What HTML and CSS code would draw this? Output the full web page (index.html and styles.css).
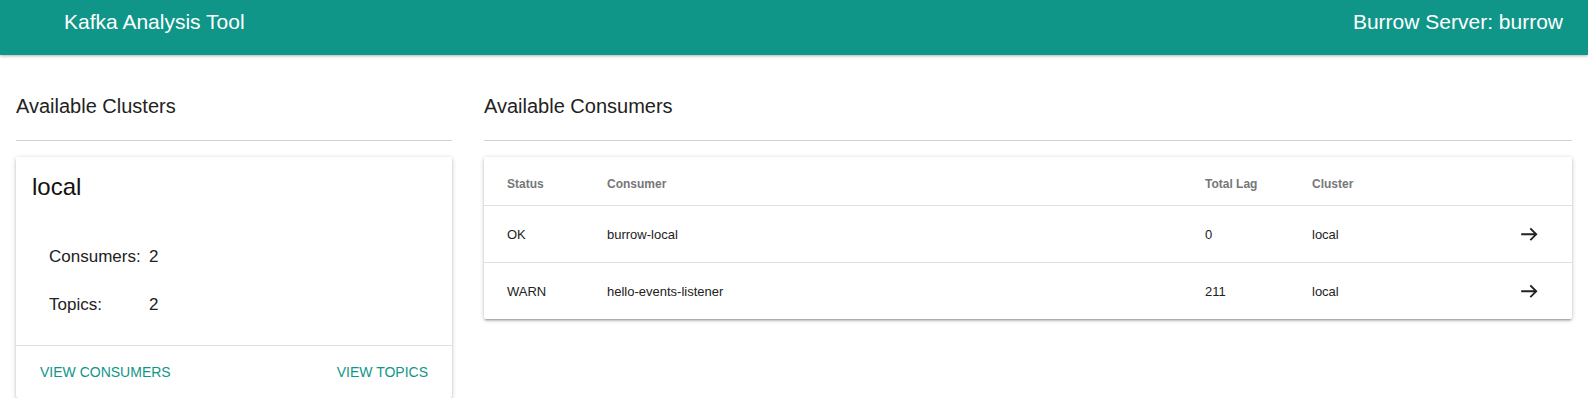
FILE: index.html
```html
<!DOCTYPE html>
<html lang="en">
<head>
<meta charset="utf-8">
<title>Kafka Analysis Tool</title>
<link rel="stylesheet" href="styles.css">
</head>
<body>
<header class="appbar">
  <div class="appbar-title">Kafka Analysis Tool</div>
  <div class="appbar-server">Burrow Server: burrow</div>
</header>
<main class="content">
  <section class="col col-left">
    <h2 class="section-title">Available Clusters</h2>
    <hr class="section-divider">
    <div class="card">
      <div class="card-body">
        <div class="card-title">local</div>
        <div class="stats">
          <div class="stat-label">Consumers:</div><div class="stat-value">2</div>
          <div class="stat-label">Topics:</div><div class="stat-value">2</div>
        </div>
      </div>
      <div class="card-actions">
        <span class="btn">View Consumers</span>
        <span class="btn">View Topics</span>
      </div>
    </div>
  </section>
  <section class="col col-right">
    <h2 class="section-title">Available Consumers</h2>
    <hr class="section-divider">
    <div class="table-card">
      <div class="trow thead">
        <div>Status</div><div>Consumer</div><div>Total Lag</div><div>Cluster</div><div></div>
      </div>
      <div class="trow tbody">
        <div>OK</div><div>burrow-local</div><div>0</div><div>local</div>
        <div class="arrow"><svg width="24" height="24" viewBox="0 0 24 24"><path d="M4.2 12.3H19.2M13.3 6.4L19.2 12.3L13.3 18.2" fill="none" stroke="#222" stroke-width="1.9"/></svg></div>
      </div>
      <div class="trow tbody">
        <div>WARN</div><div>hello-events-listener</div><div>211</div><div>local</div>
        <div class="arrow"><svg width="24" height="24" viewBox="0 0 24 24"><path d="M4.2 12.3H19.2M13.3 6.4L19.2 12.3L13.3 18.2" fill="none" stroke="#222" stroke-width="1.9"/></svg></div>
      </div>
    </div>
  </section>
</main>
</body>
</html>
```
FILE: styles.css
```css
* { box-sizing: border-box; }
html, body { margin: 0; padding: 0; background: #fff; }
body {
  font-family: "Liberation Sans", Arial, Helvetica, sans-serif;
  color: #222;
}
.appbar {
  height: 55px;
  background: #109688;
  color: #fff;
  display: flex;
  justify-content: space-between;
  align-items: flex-start;
  padding: 10px 25px 0 64px;
  font-size: 21px;
  line-height: 24px;
  box-shadow: 0 1px 3px rgba(0,0,0,0.3);
  position: relative;
}
.content {
  display: flex;
  gap: 32px;
  padding: 0 16px;
}
.col-left { width: 436px; flex: none; }
.col-right { flex: 1; }
.section-title {
  margin: 39px 0 0;
  font-size: 20px;
  line-height: 24px;
  font-weight: 400;
  color: #222;
}
.section-divider {
  margin: 22px 0 16px;
  border: 0;
  border-top: 1px solid #d2d2d2;
  height: 0;
}
.card, .table-card {
  background: #fff;
  border-radius: 2px;
  box-shadow: 0 1px 5px rgba(0,0,0,0.2), 0 2px 2px rgba(0,0,0,0.14), 0 3px 1px -2px rgba(0,0,0,0.12);
}
.card-body { padding: 14px 16px 16px; }
.card-title {
  font-size: 24px;
  line-height: 32px;
  color: #111;
}
.stats {
  margin-top: 30px;
  margin-left: 17px;
  display: grid;
  grid-template-columns: 100px auto;
  font-size: 17px;
  line-height: 48px;
  color: #222;
}
.card-actions {
  border-top: 1px solid #e0e0e0;
  height: 53px;
  display: flex;
  justify-content: space-between;
  align-items: center;
  padding: 0 24px;
}
.btn {
  text-transform: uppercase;
  color: #109688;
  font-size: 14px;
}
.trow {
  display: grid;
  grid-template-columns: 100px 598px 107px 1fr 24px;
  padding: 0 31px 0 23px;
  align-items: center;
}
.thead {
  height: 48px;
  padding-top: 6px;
  font-size: 12px;
  font-weight: 700;
  color: #777;
}
.tbody {
  height: 57px;
  border-top: 1px solid #e0e0e0;
  font-size: 13px;
  color: #222;
}
.arrow { display: flex; height: 24px; }
.arrow svg { display: block; }
```
